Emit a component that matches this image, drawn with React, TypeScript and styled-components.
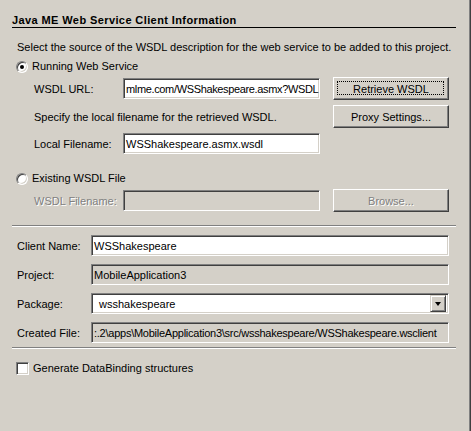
import * as React from "react";
import styled, { createGlobalStyle, css } from "styled-components";

const FACE = "#d4d0c8";
const SHADOW = "#808080";
const DARK = "#404040";

const GlobalStyle = createGlobalStyle`
  html, body {
    margin: 0;
    padding: 0;
    background: ${FACE};
  }
  body {
    font-family: "Liberation Sans", Arial, sans-serif;
    font-size: 11px;
    color: #000000;
  }
`;

const Window = styled.div`
  box-sizing: border-box;
  width: 471px;
  height: 431px;
  padding: 0 15px 0 12px;
  background: ${FACE};
  box-shadow: inset -1px 0 ${DARK}, inset -2px 0 ${SHADOW};
  display: flex;
  flex-direction: column;
  overflow: hidden;
`;

const Title = styled.h1`
  margin: 0;
  padding-top: 13px;
  line-height: 14px;
  font-size: 11px;
  font-weight: 700;
  letter-spacing: 0.4px;
  border-bottom: 1px solid #000000;
`;

const Intro = styled.p`
  margin: 12px 0 0 5px;
  line-height: 14px;
  white-space: nowrap;
`;

const Choice = styled.label<{ $top: number }>`
  margin: ${(p) => p.$top}px 0 0 4px;
  height: 13px;
  display: flex;
  align-items: center;
  gap: 4px;
  line-height: 13px;
  white-space: nowrap;
`;

const Radio = styled.span<{ $checked?: boolean }>`
  box-sizing: border-box;
  flex: none;
  width: 12px;
  height: 12px;
  border-radius: 50%;
  border: 1px solid;
  border-color: ${SHADOW} #ffffff #ffffff ${SHADOW};
  box-shadow: inset 1px 1px ${DARK}, inset -1px -1px ${FACE};
  background: #ffffff;
  display: flex;
  align-items: center;
  justify-content: center;

  &::after {
    content: "";
    width: 4px;
    height: 4px;
    border-radius: 50%;
    background: #000000;
    display: ${(p) => (p.$checked ? "block" : "none")};
  }
`;

const Check = styled.span`
  box-sizing: border-box;
  flex: none;
  width: 13px;
  height: 13px;
  border: 1px solid;
  border-color: ${SHADOW} #ffffff #ffffff ${SHADOW};
  box-shadow: inset 1px 1px ${DARK}, inset -1px -1px ${FACE};
  background: #ffffff;
`;

const SourceForm = styled.div<{ $top: number; $rows: string }>`
  margin: ${(p) => p.$top}px 0 0 22px;
  display: grid;
  grid-template-columns: 76px 197px 116px;
  grid-template-rows: ${(p) => p.$rows};
  column-gap: 13px;
  align-items: center;
`;

const Label = styled.span<{ $disabled?: boolean; $wide?: boolean }>`
  white-space: nowrap;
  grid-column: ${(p) => (p.$wide ? "1 / 3" : "auto")};
  ${(p) =>
    p.$disabled &&
    css`
      color: ${SHADOW};
      text-shadow: 1px 1px #ffffff;
    `}
`;

const sunken = css`
  box-sizing: border-box;
  border: 1px solid;
  border-color: ${SHADOW} #ffffff #ffffff ${SHADOW};
  box-shadow: inset 1px 1px ${DARK}, inset -1px -1px ${FACE};
`;

const Field = styled.div<{ $readonly?: boolean; $squeeze?: number }>`
  ${sunken};
  height: 21px;
  padding: 0 2px;
  display: flex;
  align-items: center;
  background: ${(p) => (p.$readonly ? FACE : "#ffffff")};
  letter-spacing: ${(p) => (p.$squeeze ? `-${p.$squeeze}px` : "normal")};
  white-space: nowrap;
  overflow: hidden;
`;

const Button = styled.button<{ $focused?: boolean }>`
  box-sizing: border-box;
  height: 23px;
  margin: 0;
  padding: 0;
  font: inherit;
  color: #000000;
  background: ${FACE};
  border: 1px solid;
  border-color: #ffffff ${DARK} ${DARK} #ffffff;
  box-shadow: inset -1px -1px ${SHADOW};
  position: relative;

  &:disabled {
    color: ${SHADOW};
    text-shadow: 1px 1px #ffffff;
  }

  ${(p) =>
    p.$focused &&
    css`
      &::after {
        content: "";
        position: absolute;
        inset: 3px 4px 4px 3px;
        border: 1px dotted #000000;
      }
    `}
`;

const Gap = styled.span`
  grid-column: 1 / -1;
`;

const Separator = styled.hr<{ $top: number }>`
  margin: ${(p) => p.$top}px 0 0 0;
  height: 0;
  border: 0;
  border-top: 1px solid ${SHADOW};
  border-bottom: 1px solid #ffffff;
`;

const ClientForm = styled.div`
  margin: 8px 0 0 5px;
  display: grid;
  grid-template-columns: 74px 358px;
  grid-auto-rows: 21px;
  row-gap: 8px;
  align-items: center;
`;

const Combo = styled.div`
  ${sunken};
  height: 21px;
  padding: 2px 2px 2px 7px;
  display: flex;
  align-items: center;
  background: #ffffff;
`;

const ComboText = styled.span`
  flex: 1;
`;

const ComboButton = styled.span`
  box-sizing: border-box;
  width: 16px;
  height: 17px;
  border: 1px solid;
  border-color: ${FACE} ${DARK} ${DARK} ${FACE};
  box-shadow: inset 1px 1px #ffffff, inset -1px -1px ${SHADOW};
  background: ${FACE};
  display: flex;
  align-items: center;
  justify-content: center;
`;

const Arrow = styled.span`
  width: 0;
  height: 0;
  border-left: 3.5px solid transparent;
  border-right: 3.5px solid transparent;
  border-top: 4px solid #000000;
`;

const App: React.FC = () => {
  return (
    <>
      <GlobalStyle />
      <Window>
        <Title>Java ME Web Service Client Information</Title>
        <Intro>Select the source of the WSDL description for the web service to be added to this project.</Intro>
        <Choice $top={6}>
          <Radio $checked />
          Running Web Service
        </Choice>
        <SourceForm $top={4} $rows="23px 5px 23px 4px 23px">
          <Label>WSDL URL:</Label>
          <Field $squeeze={0.35}>mlme.com/WSShakespeare.asmx?WSDL</Field>
          <Button $focused>Retrieve WSDL</Button>
          <Gap />
          <Label $wide>Specify the local filename for the retrieved WSDL.</Label>
          <Button>Proxy Settings...</Button>
          <Gap />
          <Label>Local Filename:</Label>
          <Field>WSShakespeare.asmx.wsdl</Field>
        </SourceForm>
        <Choice $top={17}>
          <Radio />
          Existing WSDL File
        </Choice>
        <SourceForm $top={4} $rows="23px">
          <Label $disabled>WSDL Filename:</Label>
          <Field $readonly />
          <Button disabled>Browse...</Button>
        </SourceForm>
        <Separator $top={13} />
        <ClientForm>
          <Label>Client Name:</Label>
          <Field>WSShakespeare</Field>
          <Label>Project:</Label>
          <Field $readonly>MobileApplication3</Field>
          <Label>Package:</Label>
          <Combo>
            <ComboText>wsshakespeare</ComboText>
            <ComboButton>
              <Arrow />
            </ComboButton>
          </Combo>
          <Label>Created File:</Label>
          <Field $readonly $squeeze={0.25}>:.2\apps\MobileApplication3\src/wsshakespeare/WSShakespeare.wsclient</Field>
        </ClientForm>
        <Separator $top={4} />
        <Choice $top={13}>
          <Check />
          Generate DataBinding structures
        </Choice>
      </Window>
    </>
  );
};

export default App;
